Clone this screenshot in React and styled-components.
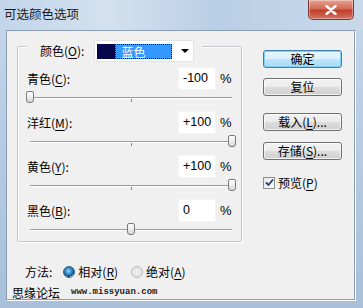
import React from "react";
import styled, { createGlobalStyle } from "styled-components";

const GlobalStyle = createGlobalStyle`
  html, body { margin: 0; padding: 0; background: #fff; }
  body { font-family: "Noto Sans CJK SC", "DejaVu Sans", sans-serif; font-size: 12px; color: #000; }
`;

const Window = styled.div`
  width: 363px;
  height: 308px;
  display: flex;
  flex-direction: column;
  background: linear-gradient(180deg, #c6d7ea 0%, #b7cde5 40%, #a9c0da 100%);
  overflow: hidden;
`;

const TitleBar = styled.div`
  height: 30px;
  display: flex;
  align-items: flex-start;
  background: linear-gradient(90deg, #c2d5ea 0%, #d3e1ef 30%, #b9cfe6 60%, #c9d9ea 100%);
`;

const Title = styled.div`
  margin: 5px 0 0 4px;
  font-size: 12.5px;
  line-height: 18px;
  color: #1b1b1b;
`;

const Close = styled.div`
  margin-left: auto;
  margin-right: 9px;
  width: 46px;
  height: 20px;
  border: 1px solid #7a3a34;
  border-top: none;
  border-radius: 0 0 5px 5px;
  box-sizing: border-box;
  background: linear-gradient(180deg, #e8a493 0%, #d26a58 45%, #c0402c 55%, #d2735f 100%);
  box-shadow: inset 0 0 0 1px rgba(255, 255, 255, 0.35);
  display: flex;
  align-items: center;
  justify-content: center;
`;

const Frame = styled.div`
  flex: 1;
  display: flex;
  padding: 0 8px 8px 6px;
`;

const Client = styled.div`
  flex: 1;
  display: flex;
  background: #f0f0f0;
  border: 1px solid #8b9db3;
  box-shadow: 1px 1px 0 #ffffff;
`;

const LeftCol = styled.div`
  width: 235px;
  display: flex;
  flex-direction: column;
  padding-top: 15px;
`;

const Group = styled.div`
  margin-left: 10px;
  width: 225px;
  height: 196px;
  box-sizing: border-box;
  border: 1px solid #c4c8cc;
  border-radius: 2px;
  box-shadow: inset 1px 1px 0 #ffffff, 1px 1px 0 #ffffff;
  padding: 0 9px;
  display: flex;
  flex-direction: column;
`;

const Legend = styled.div`
  margin: -7px 0 5px 0;
  padding: 0 5px 0 13px;
  width: 175px;
  height: 22px;
  box-sizing: border-box;
  background: #f0f0f0;
  display: flex;
  align-items: center;
`;

const Label = styled.span`
  flex: ${(p) => (p.$grow ? 1 : "none")};
  white-space: nowrap;
  line-height: 16px;
  u { text-decoration: underline; text-underline-offset: 2px; }
`;

const Dropdown = styled.div`
  margin-left: 10px;
  width: 100px;
  height: 22px;
  box-sizing: border-box;
  background: #fff;
  border: 1px solid #e2e2e2;
  display: flex;
  align-items: center;
  padding-left: 2px;
`;

const Swatch = styled.div`
  width: 18px;
  height: 15px;
  background: #06064a;
`;

const Selected = styled.div`
  width: 57px;
  height: 15px;
  box-sizing: border-box;
  background: #3399ff;
  border: 1px dotted #1a1a1a;
  color: #fff;
  padding-left: 5px;
  font-size: 12px;
  line-height: 13px;
`;

const Arrow = styled.div`
  margin-left: 9px;
  width: 0;
  height: 0;
  border-left: 4px solid transparent;
  border-right: 4px solid transparent;
  border-top: 4px solid #000;
`;

const Control = styled.div`
  display: flex;
  flex-direction: column;
`;

const FieldRow = styled.div`
  height: 23px;
  display: flex;
  align-items: center;
`;

const NumBox = styled.div`
  width: 38px;
  height: 23px;
  box-sizing: border-box;
  background: #fff;
  border: 1px solid #f4f4f4;
  padding-left: 4px;
  line-height: 21px;
  font-family: "Liberation Sans", Arial, sans-serif;
  font-size: 12.5px;
`;

const Pct = styled.span`
  width: 12px;
  margin-left: 4px;
  font-family: "Liberation Sans", Arial, sans-serif;
  font-size: 13px;
`;

const SliderBox = styled.div`
  height: 21px;
  padding-top: 7px;
  box-sizing: border-box;
  padding-left: 3px;
`;

const Track = styled.div`
  position: relative;
  height: 1px;
  background: #9c9c9c;
  border-bottom: 1px solid #ffffff;
`;

const Tick = styled.div`
  position: absolute;
  top: 2px;
  left: 50%;
  width: 1px;
  height: 3px;
  background: #8a8a8a;
`;

const Thumb = styled.div`
  position: absolute;
  top: -6px;
  width: 8px;
  height: 12px;
  margin-left: -4px;
  box-sizing: border-box;
  border: 1px solid #7b7b7b;
  border-radius: 2px 2px 3px 3px;
  background: linear-gradient(180deg, #ffffff 0%, #e9e9e9 60%, #d4d4d4 100%);
`;

const MethodRow = styled.div`
  margin: 20px 0 0 18px;
  height: 20px;
  display: flex;
  align-items: center;
`;

const Radio = styled.span`
  width: 12px;
  height: 12px;
  box-sizing: border-box;
  border-radius: 50%;
  margin: ${(p) => (p.$first ? "0 3px 0 11px" : "0 3px 0 13px")};
  border: 1px solid ${(p) => (p.$on ? "#2c628b" : "#b9b9b9")};
  background: ${(p) =>
    p.$on
      ? "radial-gradient(circle at 45% 40%, #9fd2f2 0%, #2a7fc0 45%, #164c7a 70%, #e9eef2 72%)"
      : "radial-gradient(circle, #f4f4f4 0%, #e3e3e3 60%, #fafafa 100%)"};
`;

const Watermark = styled.div`
  margin: 3px 0 0 5px;
  height: 14px;
  display: flex;
  align-items: center;
  white-space: nowrap;
`;

const Url = styled.span`
  margin-left: 11px;
  font-family: "Liberation Mono", "DejaVu Sans Mono", monospace;
  font-weight: bold;
  font-size: 9px;
  color: #222;
`;

const RightCol = styled.div`
  margin-left: 21px;
  width: 79px;
  padding-top: 19px;
  display: flex;
  flex-direction: column;
`;

const Button = styled.div`
  height: 18px;
  box-sizing: border-box;
  margin-top: ${(p) => p.$gap || 0}px;
  border: 1px solid ${(p) => (p.$default ? "#3c7fb1" : "#707070")};
  border-radius: 3px;
  background: ${(p) =>
    p.$default
      ? "linear-gradient(180deg, #eaf6fd 0%, #d9f0fc 50%, #bee6fd 51%, #a7d9f5 100%)"
      : "linear-gradient(180deg, #f2f2f2 0%, #ebebeb 50%, #dddddd 51%, #cfcfcf 100%)"};
  box-shadow: inset 0 0 0 1px ${(p) => (p.$default ? "#7fd0f5" : "rgba(255,255,255,0.7)")};
  display: flex;
  align-items: center;
  justify-content: center;
  font-size: 12px;
  line-height: 14px;
  u { text-decoration: underline; text-underline-offset: 2px; }
`;

const CheckRow = styled.div`
  margin-top: 16px;
  display: flex;
  align-items: center;
  height: 13px;
`;

const Check = styled.span`
  width: 12px;
  height: 12px;
  box-sizing: border-box;
  border: 1px solid #8e8f8f;
  background: linear-gradient(135deg, #e8e8e8, #fafafa);
  display: flex;
  align-items: center;
  justify-content: center;
  margin-right: 3px;
`;

const controls = [
  { name: "青色", key: "C", value: "-100", pos: 0 },
  { name: "洋红", key: "M", value: "+100", pos: 100 },
  { name: "黄色", key: "Y", value: "+100", pos: 100 },
  { name: "黑色", key: "B", value: "0", pos: 50 },
];

function App() {
  return (
    <>
      <GlobalStyle />
      <Window>
        <TitleBar>
          <Title>可选颜色选项</Title>
          <Close>
            <svg width="12" height="10" viewBox="0 0 12 10">
              <path d="M1.5 1 L10.5 9 M10.5 1 L1.5 9" stroke="#fff" strokeWidth="2.4" strokeLinecap="round" />
            </svg>
          </Close>
        </TitleBar>
        <Frame>
          <Client>
            <LeftCol>
              <Group>
                <Legend>
                  <Label>
                    颜色(<u>O</u>):
                  </Label>
                  <Dropdown>
                    <Swatch />
                    <Selected>蓝色</Selected>
                    <Arrow />
                  </Dropdown>
                </Legend>
                {controls.map((c) => (
                  <Control key={c.key}>
                    <FieldRow>
                      <Label $grow>
                        {c.name}(<u>{c.key}</u>):
                      </Label>
                      <NumBox>{c.value}</NumBox>
                      <Pct>%</Pct>
                    </FieldRow>
                    <SliderBox>
                      <Track>
                        <Tick />
                        <Thumb style={{ left: `${c.pos}%` }} />
                      </Track>
                    </SliderBox>
                  </Control>
                ))}
              </Group>
              <MethodRow>
                <Label>方法:</Label>
                <Radio $on $first />
                <Label>
                  相对(<u>R</u>)
                </Label>
                <Radio />
                <Label>
                  绝对(<u>A</u>)
                </Label>
              </MethodRow>
              <Watermark>
                <span>思缘论坛</span>
                <Url>www.missyuan.com</Url>
              </Watermark>
            </LeftCol>
            <RightCol>
              <Button $default>确定</Button>
              <Button $gap={10}>复位</Button>
              <Button $gap={17}>
                载入(<u>L</u>)...
              </Button>
              <Button $gap={11}>
                存储(<u>S</u>)...
              </Button>
              <CheckRow>
                <Check>
                  <svg width="9" height="9" viewBox="0 0 9 9">
                    <path d="M1 4.5 L3.5 7 L8 1.5" stroke="#1c3f7a" strokeWidth="1.8" fill="none" />
                  </svg>
                </Check>
                <Label>
                  预览(<u>P</u>)
                </Label>
              </CheckRow>
            </RightCol>
          </Client>
        </Frame>
      </Window>
    </>
  );
}

export default App;
